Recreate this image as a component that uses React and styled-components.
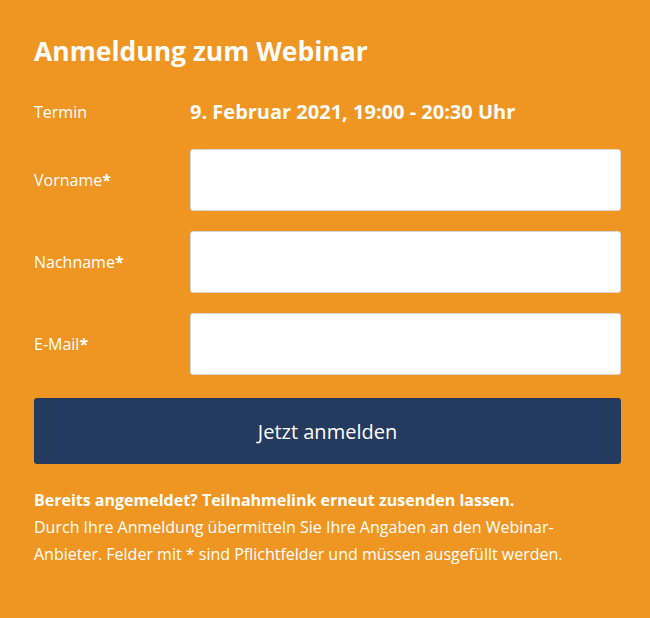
import React from 'react';
import styled, { createGlobalStyle } from 'styled-components';

const GlobalStyle = createGlobalStyle`
  html, body {
    margin: 0;
    padding: 0;
    background: #ef9622;
  }
  body {
    font-family: "Open Sans", "Noto Sans", "Liberation Sans", sans-serif;
  }
`;

const Panel = styled.div`
  width: 650px;
  height: 618px;
  box-sizing: border-box;
  padding: 34px 29px 0 34px;
  background: #ef9622;
  color: #fff;
`;

const Title = styled.h2`
  margin: 0 0 32px;
  font-size: 26.5px;
  line-height: 34px;
  font-weight: 700;
`;

const Row = styled.div`
  display: grid;
  grid-template-columns: 156px 1fr;
  align-items: center;
  margin-bottom: ${(p) => p.$gap || 20}px;
`;

const Label = styled.label`
  font-size: 16px;
  line-height: 22px;
`;

const Required = styled.span`
  font-weight: 700;
`;

const Value = styled.div`
  font-size: 20px;
  font-weight: 700;
  line-height: 24px;
`;

const Input = styled.input`
  box-sizing: border-box;
  height: 62px;
  width: 100%;
  border: 1px solid #d7d7d7;
  border-radius: 3px;
  background: #fff;
  font: inherit;
  padding: 0 14px;
  outline: none;
`;

const Submit = styled.button`
  display: block;
  width: 100%;
  height: 66px;
  margin-top: 23px;
  border: none;
  border-radius: 3px;
  background: #243a5e;
  color: #fff;
  font-family: inherit;
  font-size: 20px;
  cursor: pointer;
`;

const Notes = styled.div`
  margin-top: 23px;
  font-size: 16px;
  line-height: 27px;
`;

const Strong = styled.div`
  font-weight: 700;
`;

const fields = [
  { id: 'vorname', label: 'Vorname', type: 'text' },
  { id: 'nachname', label: 'Nachname', type: 'text' },
  { id: 'email', label: 'E-Mail', type: 'email' },
];

const App = () => {
  return (
    <>
      <GlobalStyle />
      <Panel>
        <Title>Anmeldung zum Webinar</Title>
        <Row $gap={25}>
          <Label as="span">Termin</Label>
          <Value>9. Februar 2021, 19:00 - 20:30 Uhr</Value>
        </Row>
        {fields.map((f) => (
          <Row key={f.id}>
            <Label htmlFor={f.id}>
              {f.label}
              <Required>*</Required>
            </Label>
            <Input id={f.id} type={f.type} />
          </Row>
        ))}
        <Submit type="button">Jetzt anmelden</Submit>
        <Notes>
          <Strong>Bereits angemeldet? Teilnahmelink erneut zusenden lassen.</Strong>
          Durch Ihre Anmeldung übermitteln Sie Ihre Angaben an den Webinar-
          <br />
          Anbieter. Felder mit * sind Pflichtfelder und müssen ausgefüllt werden.
        </Notes>
      </Panel>
    </>
  );
};

export default App;
